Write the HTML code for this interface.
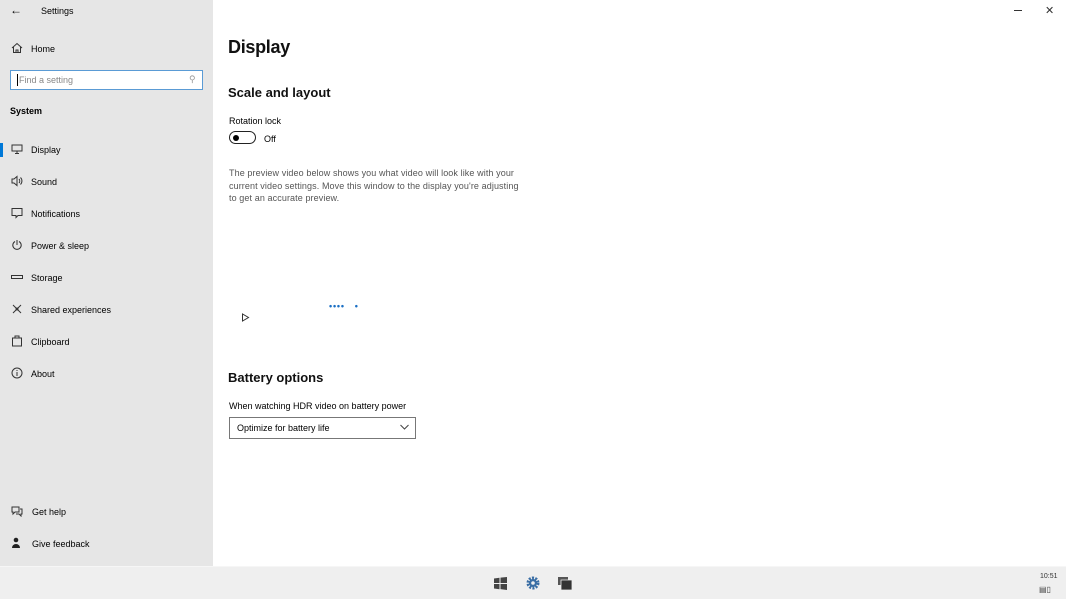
<!DOCTYPE html>
<html><head><style>
*{margin:0;padding:0;box-sizing:border-box}
body{width:1066px;height:599px;overflow:hidden;background:#fff;font-family:"Liberation Sans",sans-serif;color:#000;position:relative}
.side{position:absolute;left:0;top:0;width:213px;height:566px;background:#e6e6e6}
.t{position:absolute;white-space:nowrap}
.s9{font-size:9px}
.ni{position:absolute;left:11px;width:12px;height:12px}
.task{position:absolute;left:0;top:566px;width:1066px;height:33px;background:#efefef;border-top:1px solid #f6f6f6}
</style></head><body>
<div class="side">
<div class="t" style="left:10px;top:3px;font-size:12px">&#8592;</div>
<div class="t s9" style="left:41px;top:6px">Settings</div>
<svg class="ni" style="top:42px" viewBox="0 0 12 12" fill="none" stroke="#333" stroke-width="1"><path d="M1 6 6 1.5 11 6M2.5 5v5.5h7V5M5 10.5V8h2v2.5"/></svg>
<div class="t s9" style="left:31px;top:44px">Home</div>
<div style="position:absolute;left:10px;top:70px;width:193px;height:20px;background:#fff;border:1px solid #5a9bd5"></div>
<div style="position:absolute;left:17px;top:74px;width:1px;height:12px;background:#000"></div>
<div class="t s9" style="left:19px;top:75px;color:#888">Find a setting</div>
<div class="t s9" style="left:189px;top:74px;color:#999">&#9906;</div>
<div class="t s9" style="left:10px;top:106px;font-weight:bold">System</div>
<div style="position:absolute;left:0;top:143px;width:3px;height:14px;background:#0078d7"></div>
<svg class="ni" style="top:143px" viewBox="0 0 12 12" fill="none" stroke="#333"><path d="M1 2h10v6H1zM6 8v2M4 10.5h4"/></svg>
<div class="t s9" style="left:31px;top:145px">Display</div>
<svg class="ni" style="top:175px" viewBox="0 0 12 12" fill="none" stroke="#333"><path d="M1 4h2l3-2.5v9L3 8H1zM8 4a3 3 0 0 1 0 4M9.5 2.5a5 5 0 0 1 0 7"/></svg>
<div class="t s9" style="left:31px;top:177px">Sound</div>
<svg class="ni" style="top:207px" viewBox="0 0 12 12" fill="none" stroke="#333"><path d="M1 1.5h10v7H7l-2 2v-2H1z"/></svg>
<div class="t s9" style="left:31px;top:209px">Notifications</div>
<svg class="ni" style="top:239px" viewBox="0 0 12 12" fill="none" stroke="#333"><path d="M4 2.5a4.2 4.2 0 1 0 4 0M6 1v5"/></svg>
<div class="t s9" style="left:31px;top:241px">Power &amp; sleep</div>
<svg class="ni" style="top:271px" viewBox="0 0 12 12" fill="none" stroke="#333"><path d="M0.5 4.5h11v3H.5z"/></svg>
<div class="t s9" style="left:31px;top:273px">Storage</div>
<svg class="ni" style="top:303px" viewBox="0 0 12 12" fill="none" stroke="#333"><path d="M2 2l8 8M10 2 2 10"/><circle cx="6" cy="6" r="1"/></svg>
<div class="t s9" style="left:31px;top:305px">Shared experiences</div>
<svg class="ni" style="top:335px" viewBox="0 0 12 12" fill="none" stroke="#333"><path d="M1.5 3h9v8h-9zM4 3V1h4v2"/></svg>
<div class="t s9" style="left:31px;top:337px">Clipboard</div>
<svg class="ni" style="top:367px" viewBox="0 0 12 12" fill="none" stroke="#333"><circle cx="6" cy="6" r="5"/><path d="M6 5v4M6 3v1"/></svg>
<div class="t s9" style="left:31px;top:369px">About</div>
<svg class="ni" style="top:505px" viewBox="0 0 12 12" fill="none" stroke="#333"><path d="M1 2h7v5H4L2 9V7H1zM9 4h2v5h-1v2L8 9H5"/></svg>
<div class="t s9" style="left:32px;top:507px">Get help</div>
<svg class="ni" style="top:537px" viewBox="0 0 12 12" fill="#222"><circle cx="5" cy="3" r="2.3"/><path d="M1 11a4 4 0 0 1 8 0z"/></svg>
<div class="t s9" style="left:32px;top:539px">Give feedback</div>
</div>
<div style="position:absolute;left:1014px;top:10px;width:8px;height:1px;background:#333"></div>
<div class="t" style="left:1045px;top:4px;font-size:11px;color:#333">&#10005;</div>
<div class="t" style="left:228px;top:37px;font-size:18px;font-weight:bold;letter-spacing:-0.3px;color:#111">Display</div>
<div class="t" style="left:228px;top:85px;font-size:13px;font-weight:bold;color:#111">Scale and layout</div>
<div class="t s9" style="left:229px;top:116px">Rotation lock</div>
<div style="position:absolute;left:229px;top:131px;width:27px;height:13px;border:1.5px solid #222;border-radius:7px"></div>
<div style="position:absolute;left:233px;top:134.5px;width:6px;height:6px;border-radius:50%;background:#000"></div>
<div class="t s9" style="left:264px;top:134px">Off</div>
<div class="t s9" style="left:229px;top:167px;line-height:12.5px;color:#555;letter-spacing:0.1px">The preview video below shows you what video will look like with your<br>current video settings. Move this window to the display you're adjusting<br>to get an accurate preview.</div>
<div class="t" style="left:329px;top:301px;font-size:9px;color:#1a6fc4;letter-spacing:0.8px;font-weight:bold">&#8226;&#8226;&#8226;&#8226; &nbsp;&nbsp;&#8226;</div>
<svg style="position:absolute;left:241px;top:313px" width="9" height="9" viewBox="0 0 9 9" fill="none" stroke="#333"><path d="M1.5 1v7l6-3.5z"/></svg>
<div class="t" style="left:228px;top:370px;font-size:13px;font-weight:bold;color:#111">Battery options</div>
<div class="t s9" style="left:229px;top:401px">When watching HDR video on battery power</div>
<div style="position:absolute;left:229px;top:417px;width:187px;height:22px;border:1px solid #777"></div>
<div class="t s9" style="left:237px;top:423px">Optimize for battery life</div>
<svg style="position:absolute;left:400px;top:424px" width="9" height="6" viewBox="0 0 9 6" fill="none" stroke="#444"><path d="M.5 1l4 4 4-4"/></svg>
<div class="task">
<svg style="position:absolute;left:494px;top:10px" width="13" height="13" viewBox="0 0 13 13" fill="#444"><path d="M0 1.5 5.5.7V6H0zM6.5.6 13 0v6H6.5zM0 7h5.5v5.3L0 11.5zM6.5 7H13v6l-6.5-.9z"/></svg>
<svg style="position:absolute;left:526px;top:9px" width="14" height="14" viewBox="0 0 14 14"><circle cx="7" cy="7" r="5" fill="none" stroke="#3a6ea5" stroke-width="3" stroke-dasharray="2 1.2"/><circle cx="7" cy="7" r="4" fill="#3a6ea5"/><circle cx="7" cy="7" r="1.8" fill="#efefef"/></svg>
<svg style="position:absolute;left:558px;top:10px" width="14" height="13" viewBox="0 0 14 13"><path d="M0 0h10v8H0z" fill="#555"/><path d="M3 3h11v10H3z" fill="#333" stroke="#efefef" stroke-width=".8"/></svg>
<div class="t" style="left:1040px;top:6px;font-size:7px;color:#333">10:51</div>
<div class="t" style="left:1039px;top:18px;font-size:8px;color:#444">&#9636;&#9647;</div>
</div>
</body></html>
